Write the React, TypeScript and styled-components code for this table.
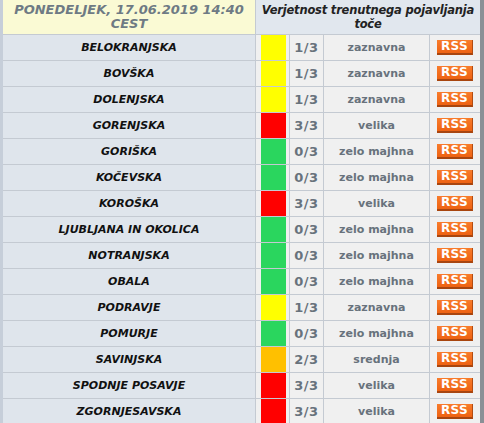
import React from "react";
import styled, { createGlobalStyle } from "styled-components";

const Global = createGlobalStyle`
  html, body { margin: 0; padding: 0; background: #ffffff; }
  body { font-family: "DejaVu Sans", Verdana, sans-serif; overflow: hidden; }
`;

const Frame = styled.div`
  width: 484px;
  height: 423px;
  box-sizing: border-box;
  border-left: 3px solid #c6ced9;
  border-right: 4px solid #8a9096;
  overflow: hidden;
`;

const Grid = styled.div`
  display: grid;
  grid-template-columns: 252px 33px 33px 105px 50px;
  grid-auto-rows: 25px;
  grid-template-rows: 34px;
  gap: 1px;
  background: #c4cad2;
  padding-bottom: 1px;
`;

const HeadDate = styled.div`
  grid-column: 1 / 2;
  background: #fafad4;
  color: #6e7a84;
  font-weight: bold;
  font-style: italic;
  font-size: 13px;
  line-height: 14px;
  text-align: center;
  display: flex;
  align-items: center;
  justify-content: center;
  white-space: nowrap;
`;

const HeadTitle = styled.div`
  grid-column: 2 / 6;
  background: #e1e7ee;
  color: #222;
  font-weight: bold;
  font-style: italic;
  font-size: 11.5px;
  letter-spacing: -0.2px;
  line-height: 14px;
  text-align: center;
  display: flex;
  align-items: center;
  justify-content: center;
  white-space: nowrap;
`;

const Region = styled.div`
  background: #dfe5ec;
  color: #111;
  font-weight: bold;
  font-style: italic;
  font-size: 11px;
  display: flex;
  align-items: center;
  justify-content: center;
`;

const SwatchCell = styled.div`
  background: #f0f0f0;
  display: flex;
  padding-left: 5px;
`;

const Swatch = styled.div<{ $c: string }>`
  width: 25px;
  height: 100%;
  background: ${(p) => p.$c};
`;

const Cell = styled.div`
  background: #f0f0f0;
  color: #68727c;
  font-weight: bold;
  font-size: 11px;
  display: flex;
  align-items: center;
  justify-content: center;
`;

const Frac = styled(Cell)`
  font-size: 13px;
  letter-spacing: 0.5px;
`;

const RssCell = styled.div`
  background: #f0f0f0;
  display: flex;
  align-items: center;
  padding-left: 7px;
`;

const Rss = styled.span`
  width: 36px;
  height: 15px;
  box-sizing: border-box;
  background: linear-gradient(#f87c2c, #ee6212);
  border-bottom: 2px solid #a8450f;
  border-right: 1px solid #b24c12;
  color: #fff;
  font-weight: bold;
  font-size: 12px;
  line-height: 13px;
  text-align: center;
  letter-spacing: 0.3px;
`;

const COLORS: Record<string, string> = {
  y: "#ffff00",
  r: "#ff0000",
  g: "#2ad65e",
  o: "#ffc000",
};

const rows: [string, string, string, string][] = [
  ["BELOKRANJSKA", "y", "1/3", "zaznavna"],
  ["BOVŠKA", "y", "1/3", "zaznavna"],
  ["DOLENJSKA", "y", "1/3", "zaznavna"],
  ["GORENJSKA", "r", "3/3", "velika"],
  ["GORIŠKA", "g", "0/3", "zelo majhna"],
  ["KOČEVSKA", "g", "0/3", "zelo majhna"],
  ["KOROŠKA", "r", "3/3", "velika"],
  ["LJUBLJANA IN OKOLICA", "g", "0/3", "zelo majhna"],
  ["NOTRANJSKA", "g", "0/3", "zelo majhna"],
  ["OBALA", "g", "0/3", "zelo majhna"],
  ["PODRAVJE", "y", "1/3", "zaznavna"],
  ["POMURJE", "g", "0/3", "zelo majhna"],
  ["SAVINJSKA", "o", "2/3", "srednja"],
  ["SPODNJE POSAVJE", "r", "3/3", "velika"],
  ["ZGORNJESAVSKA", "r", "3/3", "velika"],
];

export default function App() {
  return (
    <>
      <Global />
      <Frame>
        <Grid>
          <HeadDate>
            PONEDELJEK, 17.06.2019 14:40
            <br />
            CEST
          </HeadDate>
          <HeadTitle>
            Verjetnost trenutnega pojavljanja
            <br />
            toče
          </HeadTitle>
          {rows.map(([name, c, f, d]) => (
            <React.Fragment key={name}>
              <Region>{name}</Region>
              <SwatchCell>
                <Swatch $c={COLORS[c]} />
              </SwatchCell>
              <Frac>{f}</Frac>
              <Cell>{d}</Cell>
              <RssCell>
                <Rss>RSS</Rss>
              </RssCell>
            </React.Fragment>
          ))}
        </Grid>
      </Frame>
    </>
  );
}
